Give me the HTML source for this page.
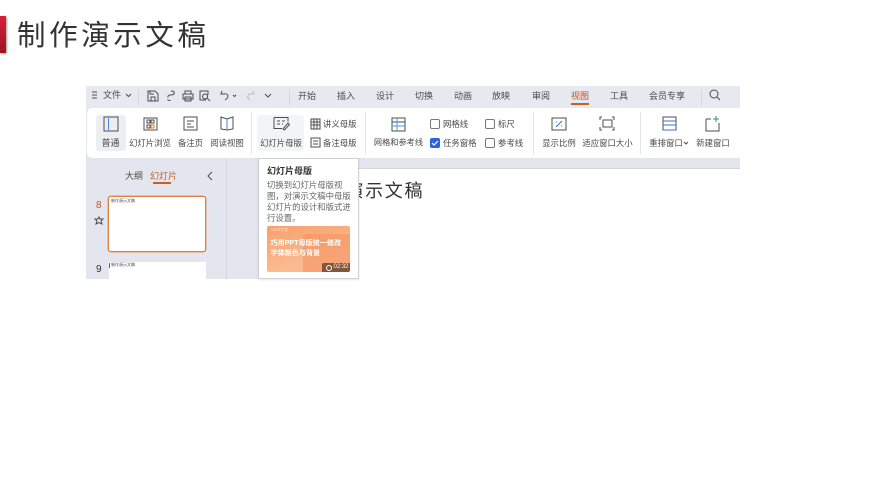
<!DOCTYPE html>
<html lang="zh"><head><meta charset="utf-8"><style>
html,body{margin:0;padding:0;background:#fff;width:870px;height:489px;overflow:hidden}
body{position:relative;font-family:"Liberation Sans","Noto Sans CJK SC",sans-serif;color:#333}
#w{position:absolute;left:0;top:0;width:870px;height:489px;filter:blur(.3px)}
.a{position:absolute}
.t{position:absolute;white-space:nowrap;line-height:12px;font-size:8.400px;color:#4a4a4a}
.m{font-size:9px}
.c{transform:translateX(-50%)}
svg{position:absolute;left:0;top:0;overflow:visible}
svg *{fill:none;stroke:#4d4d4d;stroke-width:1}
.cb{position:absolute;width:8px;height:8px;border:1px solid #777;border-radius:2px;background:#fff}
.sep{position:absolute;width:1px;background:#e2e4e9}
</style></head><body><div id="w">
<div class="a" style="left:0;top:16px;width:6px;height:37px;background:linear-gradient(#d81f3a,#9c1420);box-shadow:1px 1px 2px #999"></div>
<div class="t" style="left:17px;top:17px;font-size:28.500px;line-height:38px;letter-spacing:3.600px;color:#333">制作演示文稿</div>

<div class="a" style="left:86px;top:86px;width:654px;height:193px;background:#e3e6ee"></div>
<div class="a" style="left:86px;top:86px;width:654px;height:22px;background:#e6e9ef"></div>
<div class="a" style="left:87px;top:108px;width:653px;height:50px;background:#fff;border-radius:5px 0 0 5px"></div>
<div class="a" style="left:226px;top:158px;width:514px;height:10px;background:#e3e6ec"></div>
<div class="a" style="left:296px;top:168px;width:444px;height:111px;background:#fff"></div>
<div class="a" style="left:226px;top:158px;width:1px;height:121px;background:#d3d6dd"></div>
<div class="a" style="left:296px;top:168px;width:444px;height:1px;background:#d3d6dd"></div>
<div class="a" style="left:96px;top:115px;width:30px;height:36px;background:#eceef1;border-radius:3px"></div>
<div class="a" style="left:257px;top:115px;width:47px;height:36px;background:#f3f4f6;border-radius:3px"></div>

<svg width="870" height="489">
<path d="M92 92h5M92 95h5M92 98h5"/>
<path d="M126 94l2.500 2.500 2.500-2.500" stroke-width=".8"/>
<path d="M148 91h7l3 3v7h-10zM151 101v-4h4v4M150 91v3h4"/>
<path d="M171 91.500a2 2 0 0 1 3 2.500l-2 1h-2a2 2 0 0 0-2 2.500M167.500 99.500a2 2 0 0 0 3 .5"/>
<path d="M185 94v-3h6v3M183 94h10v5h-10zM185 97h6v4h-6z"/>
<path d="M206 100h-6v-9h8v4M205 94a2.500 2.500 0 1 0 .1 0M207 98l3 3"/>
<path d="M222 91l-1 3h3c4-1 6 3 1 6"/><path d="M233 95l1.500 1.500 1.500-1.500"/>
<path d="M253 91l1 3h-3c-3 0-5 3-1 6" style="stroke:#bbb"/>
<path d="M265 94l3 3 3-3"/>
<path d="M138.500 89v16M289.500 89v16M701.500 89v16" style="stroke:#d3d6dc"/>
<circle cx="714" cy="94" r="4"/><path d="M717 97l3 3"/>

<path d="M104 117h14v14h-14z"/><path d="M108.500 118v12" style="stroke:#4a7fe0"/>
<path d="M144 118h13v12h-13zM147 120h3v3h-3zM151 120h3v3h-3zM147 125h3v3h-3z"/><path d="M151 125h3v3h-3z" style="stroke:#e0772f"/>
<path d="M184 117h13v13h-13zM187 121h7M187 124h4M187 127h7"/>
<path d="M221 117l6 2 6-2v12l-6 1-6-1z"/><path d="M227 119v11" style="stroke:#4a7fe0"/>
<path d="M274 117.500h14v4M274 117.500v11h8M277 121h3M282 121h3M277 124h3M282 124h1"/><path d="M283 129l5-6 1.500 1.500-5 5.500z"/>
<path d="M311 119h9v10h-9zM314 119v10M317 119v10M311 122h9M311 125h9"/>
<path d="M311 138h9v9h-9zM313 141h5M313 144h5"/>
<path d="M392 118h13v13h-13zM392 122h13"/><path d="M397 118v13M392 126h13" style="stroke:#4a9be0"/>
<path d="M552 118h14v12h-14z"/><path d="M556 127l6-6M556 122h1M561 126h1" style="stroke:#3a70c8"/>
<path d="M602 117h-2v3M612 117h2v3M602 130h-2v-3M612 130h2v-3M603 120h9v7h-9z"/>
<path d="M663 117h13v13h-13z"/><path d="M663 121h13M663 125h13M663 130h13" style="stroke:#3a70d8"/>
<path d="M706 119h5M706 119v12h13v-8"/><path d="M716 116v6M713 119h6" style="stroke:#2a9a70"/>
<path d="M684 142l2 2 2-2"/>
<path d="M212 172l-4 4 4 4"/>
<path d="M95 219l3 0 1-2 1 2 3 0-2 2 1 3-3-1.500-3 1.500 1-3z"/>
</svg>

<div class="t m" style="left:103px;top:89px">文件</div>
<div class="t m" style="left:298px;top:90px">开始</div>
<div class="t m" style="left:337px;top:90px">插入</div>
<div class="t m" style="left:376px;top:90px">设计</div>
<div class="t m" style="left:415px;top:90px">切换</div>
<div class="t m" style="left:454px;top:90px">动画</div>
<div class="t m" style="left:492px;top:90px">放映</div>
<div class="t m" style="left:532px;top:90px">审阅</div>
<div class="t m" style="left:571px;top:90px;color:#c8501e">视图</div>
<div class="a" style="left:571px;top:103px;width:18px;height:2px;background:#c8601e"></div>
<div class="t m" style="left:610px;top:90px">工具</div>
<div class="t m" style="left:649px;top:90px">会员专享</div>

<div class="t m c" style="left:110.500px;top:137px">普通</div>
<div class="t c" style="left:150px;top:137px">幻灯片浏览</div>
<div class="t c" style="left:190.500px;top:137px">备注页</div>
<div class="t c" style="left:227px;top:137px">阅读视图</div>
<div class="t c" style="left:281px;top:137px">幻灯片母版</div>
<div class="t" style="left:323px;top:118px">讲义母版</div>
<div class="t" style="left:323px;top:137px">备注母版</div>
<div class="t c" style="left:398.500px;top:137px;font-size:8.200px">网格和参考线</div>
<div class="t" style="left:443px;top:118px">网格线</div>
<div class="t" style="left:443px;top:137px">任务窗格</div>
<div class="t" style="left:498px;top:118px">标尺</div>
<div class="t" style="left:498px;top:137px">参考线</div>
<div class="t c" style="left:559px;top:137px">显示比例</div>
<div class="t c" style="left:607.500px;top:137px">适应窗口大小</div>
<div class="t c" style="left:666px;top:137px">重排窗口</div>
<div class="t c" style="left:713px;top:137px">新建窗口</div>
<div class="cb" style="left:430px;top:119px"></div>
<div class="cb" style="left:485px;top:119px"></div>
<div class="cb" style="left:485px;top:138px"></div>
<div class="a" style="left:430px;top:138px;width:10px;height:10px;background:#2a62e0;border-radius:2px"></div>
<svg width="870" height="489"><path d="M432 143l2 2 4-4" style="stroke:#fff;stroke-width:1.200"/></svg>
<div class="sep" style="left:251px;top:112px;height:42px"></div>
<div class="sep" style="left:365px;top:112px;height:42px"></div>
<div class="sep" style="left:533px;top:112px;height:42px"></div>
<div class="sep" style="left:640px;top:112px;height:42px"></div>

<div class="t m" style="left:125px;top:170px">大纲</div>
<div class="t m" style="left:150px;top:170px;color:#c8601e">幻灯片</div>
<div class="a" style="left:153px;top:182px;width:18px;height:2px;background:#c8601e"></div>
<div class="t" style="left:96px;top:200px;font-size:10px;color:#c8501e">8</div>
<div class="t" style="left:96px;top:264px;font-size:10px;color:#333">9</div>
<div class="a" style="left:108px;top:196px;width:96px;height:54px;background:#fff;border:1px solid #e0803f;box-shadow:0 0 0 .5px #e8985f;border-radius:3px"></div>
<div class="t" style="left:111px;top:198px;font-size:4px;line-height:6px">制作演示文稿</div>
<div class="a" style="left:109px;top:262px;width:97px;height:17px;background:#fff"></div>
<div class="a" style="left:109px;top:263px;width:1px;height:5px;background:#c8304a"></div>
<div class="t" style="left:111px;top:262px;font-size:4px;line-height:6px">制作演示文稿</div>

<div class="t" style="left:306px;top:179px;font-size:18px;line-height:24px;letter-spacing:1.700px;color:#333">制作演示文稿</div>

<div class="a" style="left:258px;top:158px;width:99px;height:119px;background:#fff;border:1px solid #cfd1d6;box-shadow:0 1px 2px rgba(0,0,0,.1)">
<div class="t" style="left:8px;top:6px;font-size:9px;color:#333;font-weight:bold">幻灯片母版</div>
<div class="t" style="left:8px;top:20.500px;font-size:8.400px;line-height:11px;color:#666">切换到幻灯片母版视<br>图，对演示文稿中母版<br>幻灯片的设计和版式进<br>行设置。</div>
<div class="a" style="left:8px;top:67px;width:83px;height:46px;border-radius:2px;background:linear-gradient(165deg,#f7a06c,#fbbb90 70%);overflow:hidden">
<div class="a" style="left:36px;top:8px;width:47px;height:38px;background:rgba(244,140,90,.5);border-radius:3px 0 0 0"></div>
<div class="t" style="left:4px;top:0;font-size:4px;line-height:8px;color:#fdd">WPS学堂</div>
<div class="t" style="left:3.500px;top:13px;font-size:7.100px;line-height:9.500px;color:#fff;font-weight:bold">巧用PPT母版统一修改<br>字体颜色与背景</div>
<div class="a" style="left:55px;top:37px;width:28px;height:9px;background:rgba(90,60,40,.75);border-radius:2px 0 0 0"></div>
<div class="t" style="left:66.500px;top:36px;font-size:6px;line-height:11px;color:#fff">02:32</div>
<div class="a" style="left:58.500px;top:39px;width:4px;height:4px;border:1px solid #fff;border-radius:50%"></div>
</div>
</div>
</div></body></html>
